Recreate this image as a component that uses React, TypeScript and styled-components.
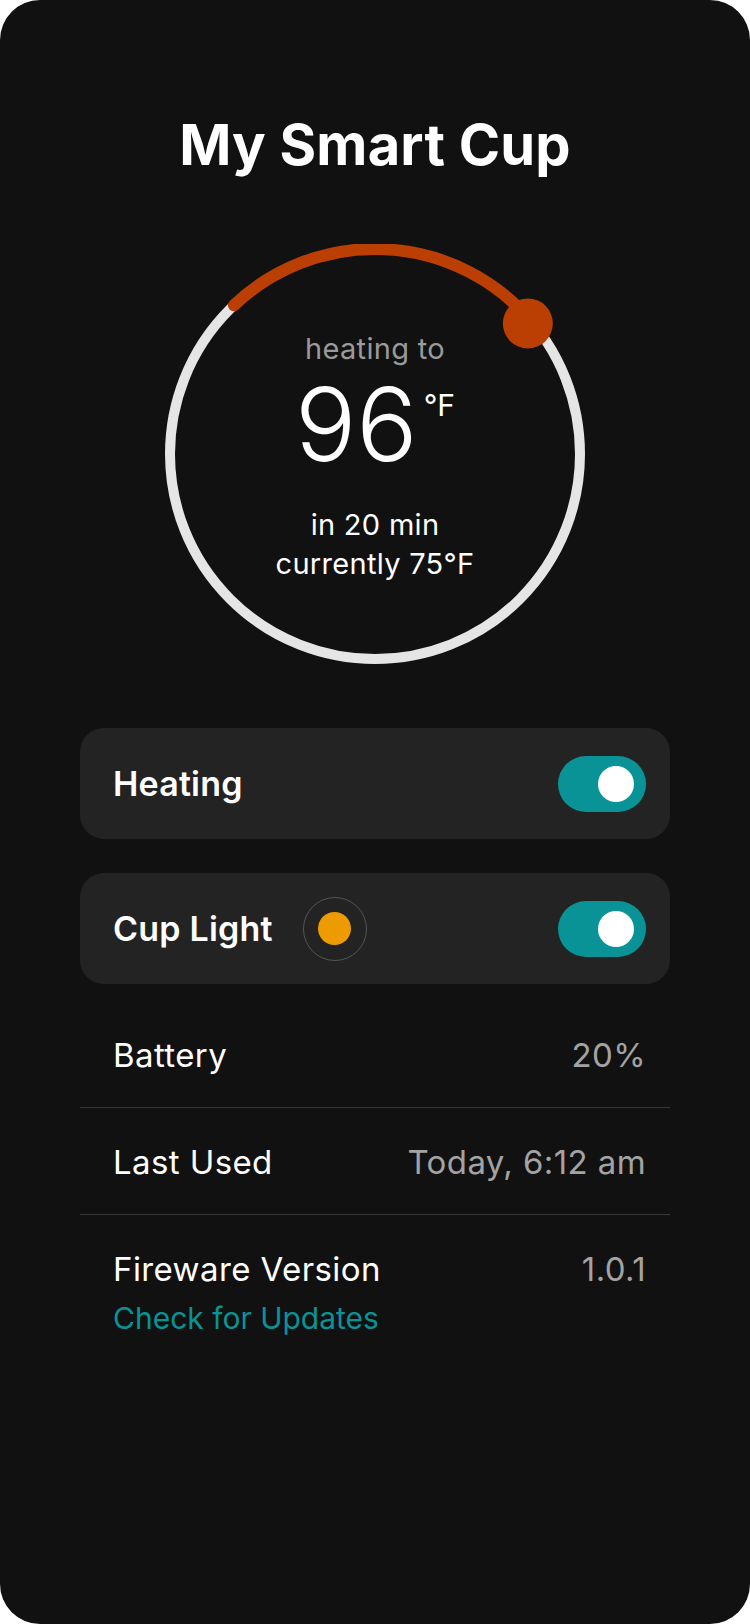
import React from "react";
import styled, { createGlobalStyle } from "styled-components";

const GlobalStyle = createGlobalStyle`
  html, body { margin: 0; padding: 0; background: #ffffff; }
  * { box-sizing: border-box; }
  body { font-family: Inter, "Noto Sans", "Liberation Sans", sans-serif; }
`;

const Screen = styled.div`
  width: 750px;
  min-height: 1624px;
  background: #111111;
  border-radius: 40px;
  display: flex;
  flex-direction: column;
  align-items: center;
  padding-top: 112px;
  color: #ffffff;
`;

const Title = styled.h1`
  margin: 0;
  font-size: 56px;
  line-height: 67px;
  font-weight: 700;
  letter-spacing: 0.2px;
`;

const Dial = styled.div`
  margin-top: 65px;
  width: 420px;
  height: 420px;
  display: grid;
  & > * { grid-area: 1 / 1; }
`;

const DialSvg = styled.svg`
  width: 420px;
  height: 420px;
  display: block;
`;

const DialText = styled.div`
  display: flex;
  flex-direction: column;
  align-items: center;
  padding-top: 88px;
`;

const Caption = styled.div`
  font-size: 29px;
  line-height: 34px;
  color: #9a9a9a;
  letter-spacing: 0.3px;
`;

const TempRow = styled.div`
  display: flex;
  align-items: flex-start;
  margin-top: 8px;
`;

const TempValue = styled.div`
  font-size: 102px;
  line-height: 100px;
  font-weight: 300;
`;

const TempUnit = styled.div`
  font-size: 30px;
  line-height: 30px;
  margin-top: 16px;
  margin-left: 6px;
`;

const SubLine = styled.div<{ $first?: boolean }>`
  font-size: 29px;
  line-height: 39px;
  letter-spacing: 0.3px;
  margin-top: ${(p) => (p.$first ? "31px" : "0")};
`;

const Controls = styled.div`
  margin-top: 64px;
  width: 590px;
  display: flex;
  flex-direction: column;
  gap: 34px;
`;

const Card = styled.div`
  height: 111px;
  background: #232323;
  border-radius: 24px;
  display: flex;
  align-items: center;
  padding: 0 24px 0 33px;
`;

const CardLabel = styled.div`
  font-size: 34px;
  line-height: 40px;
  font-weight: 600;
  letter-spacing: 0.2px;
`;

const Spacer = styled.div`
  flex: 1;
`;

const ColorRing = styled.div`
  margin-left: 30px;
  width: 64px;
  height: 64px;
  border-radius: 50%;
  border: 1.5px solid #555555;
  display: flex;
  align-items: center;
  justify-content: center;
`;

const ColorDot = styled.div<{ $color: string }>`
  width: 33px;
  height: 33px;
  border-radius: 50%;
  background: ${(p) => p.$color};
`;

const Toggle = styled.div<{ $on: boolean }>`
  width: 88px;
  height: 56px;
  border-radius: 28px;
  background: ${(p) => (p.$on ? "#0a9396" : "#444")};
  display: flex;
  align-items: center;
  justify-content: ${(p) => (p.$on ? "flex-end" : "flex-start")};
  padding: 0 12px;
`;

const Knob = styled.div`
  width: 36px;
  height: 36px;
  border-radius: 50%;
  background: #ffffff;
`;

const InfoList = styled.div`
  margin-top: 17px;
  width: 590px;
  display: flex;
  flex-direction: column;
`;

const InfoRow = styled.div<{ $last?: boolean }>`
  display: flex;
  justify-content: space-between;
  align-items: flex-start;
  padding: 34px 24px ${(p) => (p.$last ? "0" : "32px")} 33px;
  border-bottom: ${(p) => (p.$last ? "none" : "1px solid #363636")};
`;

const InfoLabelCol = styled.div`
  display: flex;
  flex-direction: column;
  gap: 11px;
`;

const InfoLabel = styled.div`
  font-size: 33px;
  line-height: 40px;
  letter-spacing: 0.4px;
  color: #ffffff;
`;

const InfoValue = styled.div`
  font-size: 33px;
  line-height: 40px;
  letter-spacing: 0.4px;
  color: #a3a3a3;
`;

const LinkText = styled.div`
  font-size: 30px;
  line-height: 36px;
  color: #0a9396;
`;

function polar(cx: number, cy: number, r: number, deg: number) {
  const rad = ((deg - 90) * Math.PI) / 180;
  return { x: cx + r * Math.cos(rad), y: cy + r * Math.sin(rad) };
}

function TempDial() {
  const c = 210;
  const r = 205;
  const start = polar(c, c, r, -43.5);
  const end = polar(c, c, r, 49.5);
  const knob = polar(c, c, 201, 49.5);
  return (
    <DialSvg viewBox="0 0 420 420">
      <circle cx={c} cy={c} r={r} fill="none" stroke="#e5e5e5" strokeWidth={10} />
      <path
        d={`M ${start.x} ${start.y} A ${r} ${r} 0 0 1 ${end.x} ${end.y}`}
        fill="none"
        stroke="#bb3e03"
        strokeWidth={12}
        strokeLinecap="round"
      />
      <circle cx={knob.x} cy={knob.y} r={25} fill="#bb3e03" />
    </DialSvg>
  );
}

export default function App() {
  return (
    <>
      <GlobalStyle />
      <Screen>
        <Title>My Smart Cup</Title>
        <Dial>
          <TempDial />
          <DialText>
            <Caption>heating to</Caption>
            <TempRow>
              <TempValue>96</TempValue>
              <TempUnit>°F</TempUnit>
            </TempRow>
            <SubLine $first>in 20 min</SubLine>
            <SubLine>currently 75°F</SubLine>
          </DialText>
        </Dial>
        <Controls>
          <Card>
            <CardLabel>Heating</CardLabel>
            <Spacer />
            <Toggle $on>
              <Knob />
            </Toggle>
          </Card>
          <Card>
            <CardLabel>Cup Light</CardLabel>
            <ColorRing>
              <ColorDot $color="#ee9b00" />
            </ColorRing>
            <Spacer />
            <Toggle $on>
              <Knob />
            </Toggle>
          </Card>
        </Controls>
        <InfoList>
          <InfoRow>
            <InfoLabel>Battery</InfoLabel>
            <InfoValue>20%</InfoValue>
          </InfoRow>
          <InfoRow>
            <InfoLabel>Last Used</InfoLabel>
            <InfoValue>Today, 6:12 am</InfoValue>
          </InfoRow>
          <InfoRow $last>
            <InfoLabelCol>
              <InfoLabel>Fireware Version</InfoLabel>
              <LinkText>Check for Updates</LinkText>
            </InfoLabelCol>
            <InfoValue>1.0.1</InfoValue>
          </InfoRow>
        </InfoList>
      </Screen>
    </>
  );
}
